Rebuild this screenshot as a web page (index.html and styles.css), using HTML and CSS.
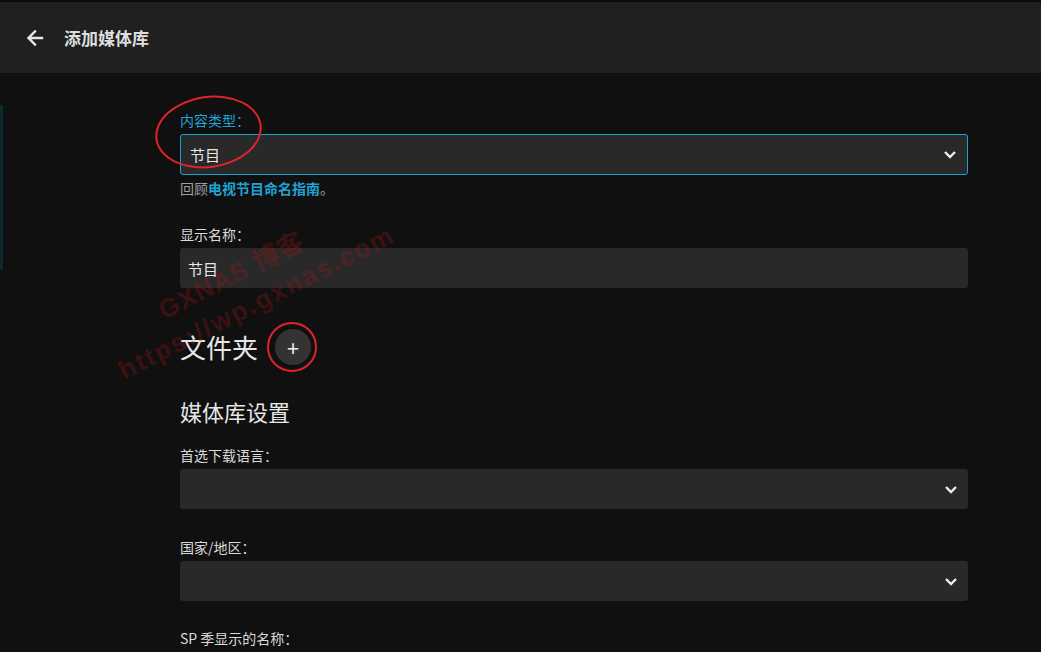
FILE: index.html
```html
<!DOCTYPE html>
<html lang="zh">
<head>
<meta charset="utf-8">
<link rel="stylesheet" href="styles.css">
</head>
<body>
<div class="edge"></div>
<header class="topbar">
  <svg class="back" width="20" height="20" viewBox="0 0 20 20"><path d="M17 10H4M10 3.5L3.5 10L10 16.5" fill="none" stroke="#e6e6e6" stroke-width="2.4" stroke-linecap="square"/></svg>
  <h1 class="title">添加媒体库</h1>
</header>
<main class="content">
  <div class="field first">
    <label class="label active">内容类型：</label>
    <div class="select focused"><span>节目</span><svg class="chev" width="14" height="9" viewBox="0 0 14 9"><path d="M2 2l5 5 5-5" fill="none" stroke="#eee" stroke-width="2.4"/></svg></div>
    <div class="help">回顾<a class="link">电视节目命名指南</a>。</div>
  </div>
  <div class="field">
    <label class="label">显示名称：</label>
    <div class="input">节目</div>
  </div>
  <div class="folders">
    <h2 class="h-folders">文件夹</h2>
    <div class="addwrap">
      <button class="add">+</button>
      <div class="ring"></div>
    </div>
  </div>
  <h2 class="h-settings">媒体库设置</h2>
  <div class="field">
    <label class="label">首选下载语言：</label>
    <div class="select"><span></span><svg class="chev" width="14" height="9" viewBox="0 0 14 9"><path d="M2 2l5 5 5-5" fill="none" stroke="#eee" stroke-width="2.4"/></svg></div>
  </div>
  <div class="field f2">
    <label class="label">国家/地区：</label>
    <div class="select"><span></span><svg class="chev" width="14" height="9" viewBox="0 0 14 9"><path d="M2 2l5 5 5-5" fill="none" stroke="#eee" stroke-width="2.4"/></svg></div>
  </div>
  <div class="field f3">
    <label class="label">SP 季显示的名称：</label>
  </div>
  <div class="oval"></div>
  <div class="wm wm1">GXNAS 博客</div>
  <div class="wm wm2">https://wp.gxnas.com</div>
</main>
</body>
</html>
```
FILE: styles.css
```css
html, body {
  margin: 0;
  padding: 0;
  background: #101010;
  height: 100%;
  overflow: hidden;
  font-family: "Noto Sans CJK SC", "Noto Sans", sans-serif;
  color: #dcdcdc;
}
.edge {
  position: absolute;
  left: 0;
  top: 105px;
  width: 3px;
  height: 165px;
  background: #0c2a2c;
}
.topbar {
  height: 71px;
  border-top: 2px solid #0c0c0c;
  background: #202020;
  display: flex;
  align-items: center;
  padding-left: 25px;
}
.back { display: block; }
.title {
  margin: 0 0 0 19px;
  font-size: 17px;
  font-weight: bold;
  color: #dedede;
}
.content {
  position: relative;
  width: 788px;
  margin-left: 180px;
  padding-top: 37px;
}
.field { display: flex; flex-direction: column; }
.label {
  font-size: 14px;
  line-height: 20px;
  color: #dadada;
  margin-bottom: 4px;
}
.label.active { color: #1fa3d6; }
.select, .input {
  height: 40px;
  background: #292929;
  border-radius: 3px;
  box-sizing: border-box;
  display: flex;
  align-items: center;
  justify-content: space-between;
  padding: 0 10px 0 8px;
  font-size: 15px;
  color: #e8e8e8;
}
.select.focused {
  height: 41px;
  border: 1px solid #1a9fd4;
  padding-left: 9px;
}
.chev { display: block; }
.help {
  font-size: 14px;
  line-height: 20px;
  margin-top: 3px;
  color: #a0a0a0;
}
.link { color: #1fa3d6; font-weight: bold; }
.field + .field { margin-top: 26px; }
.folders {
  display: flex;
  align-items: center;
  height: 48px;
  margin-top: 35px;
}
.h-folders {
  margin: 0;
  font-size: 26px;
  font-weight: normal;
  color: #e6e6e6;
  line-height: 48px;
}
.addwrap {
  position: relative;
  margin-left: 17px;
  width: 36px;
  height: 36px;
}
.add {
  width: 36px;
  height: 36px;
  border-radius: 50%;
  border: none;
  background: #333;
  color: #eee;
  font-size: 22px;
  line-height: 36px;
  padding: 0;
  font-family: "Noto Sans", sans-serif;
}
.ring {
  position: absolute;
  left: -8px;
  top: -7px;
  width: 46px;
  height: 46px;
  border: 2px solid #e0232b;
  border-radius: 50%;
}
.h-settings {
  margin: 25px 0 0 0;
  font-size: 22px;
  line-height: 30px;
  font-weight: normal;
  color: #e6e6e6;
}
.h-settings + .field { margin-top: 19px; }
.field.f2 { margin-top: 28px; }
.field.f3 { margin-top: 27px; }
.oval {
  position: absolute;
  left: -25px;
  top: 23px;
  width: 103px;
  height: 68px;
  border: 2px solid #e0232b;
  border-radius: 50%;
  transform: rotate(-8deg);
}
.wm {
  position: absolute;
  color: rgba(170, 20, 20, 0.3);
  font-weight: bold;
  font-family: "Liberation Sans", "Noto Sans CJK SC", sans-serif;
  font-size: 26px;
  line-height: 30px;
  transform-origin: left bottom;
  transform: rotate(-27deg);
  white-space: nowrap;
}
.wm1 { left: -13px; top: 222px; letter-spacing: 1px; }
.wm2 { left: -53px; top: 282px; letter-spacing: 2px; }
```
